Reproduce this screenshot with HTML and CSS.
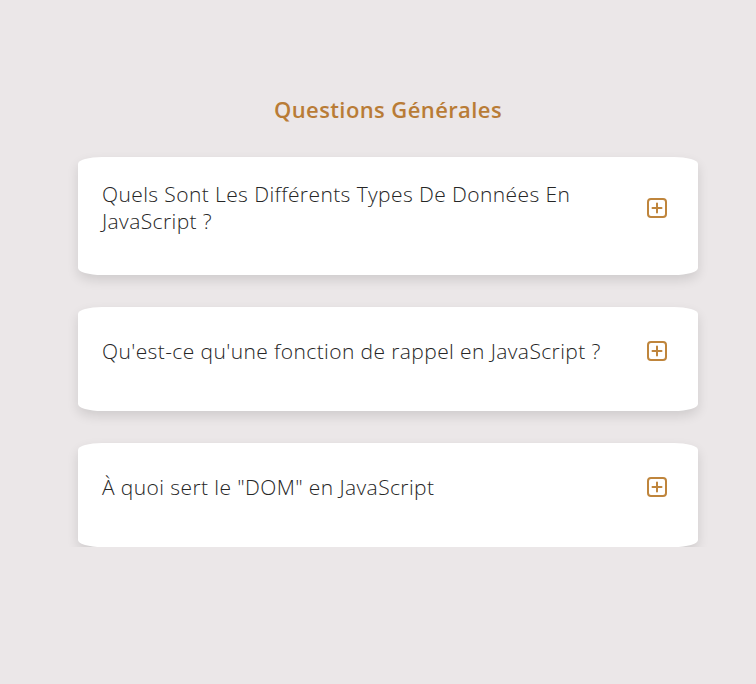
FILE: index.html
```html
<!DOCTYPE html>
<html lang="fr">
<head>
<meta charset="utf-8">
<title>Questions Générales</title>
<link rel="stylesheet" href="styles.css">
</head>
<body>
<main class="faq">
  <h2 class="faq-title">Questions Générales</h2>
  <div class="faq-list">
    <div class="faq-item">
      <div class="faq-question">
        <span class="q-text">Quels Sont Les Différents Types De Données En JavaScript ?</span>
        <svg class="q-icon" viewBox="0 0 20 20" aria-hidden="true"><rect x="1" y="1" width="18" height="18" rx="3"/><path d="M10 5.5v9M5.5 10h9"/></svg>
      </div>
    </div>
    <div class="faq-item">
      <div class="faq-question">
        <span class="q-text">Qu'est-ce qu'une fonction de rappel en JavaScript ?</span>
        <svg class="q-icon" viewBox="0 0 20 20" aria-hidden="true"><rect x="1" y="1" width="18" height="18" rx="3"/><path d="M10 5.5v9M5.5 10h9"/></svg>
      </div>
    </div>
    <div class="faq-item">
      <div class="faq-question">
        <span class="q-text">À quoi sert le "DOM" en JavaScript</span>
        <svg class="q-icon" viewBox="0 0 20 20" aria-hidden="true"><rect x="1" y="1" width="18" height="18" rx="3"/><path d="M10 5.5v9M5.5 10h9"/></svg>
      </div>
    </div>
  </div>
</main>
</body>
</html>
```

FILE: styles.css
```css
html, body {
  margin: 0;
  padding: 0;
  background: #ebe7e8;
  min-height: 100%;
}
body {
  font-family: "Open Sans", "Liberation Sans", sans-serif;
  color: #262626;
}
.faq {
  width: 620px;
  margin-left: 78px;
  padding-top: 94px;
}
.faq-title {
  margin: 0 0 33px;
  text-align: center;
  font-size: 22px;
  line-height: 30px;
  font-weight: 600;
  letter-spacing: 0.4px;
  color: #b97c36;
}
.faq-list {
  display: flex;
  flex-direction: column;
  gap: 32px;
}
.faq-item {
  background: #ffffff;
  border-radius: 24px / 7px;
  box-shadow: 0 5px 12px rgba(0, 0, 0, 0.12);
  padding: 24px 31px 40px 24px;
}
.faq-question {
  display: flex;
  align-items: center;
  justify-content: space-between;
  min-height: 40px;
  gap: 20px;
}
.q-text {
  flex: 1;
  max-width: 520px;
  font-size: 21px;
  line-height: 27px;
  font-weight: 300;
  letter-spacing: 0.4px;
}
.q-icon {
  width: 20px;
  height: 20px;
  flex: none;
  fill: none;
  stroke: #bf853c;
  stroke-width: 2;
  stroke-linecap: round;
}
```
